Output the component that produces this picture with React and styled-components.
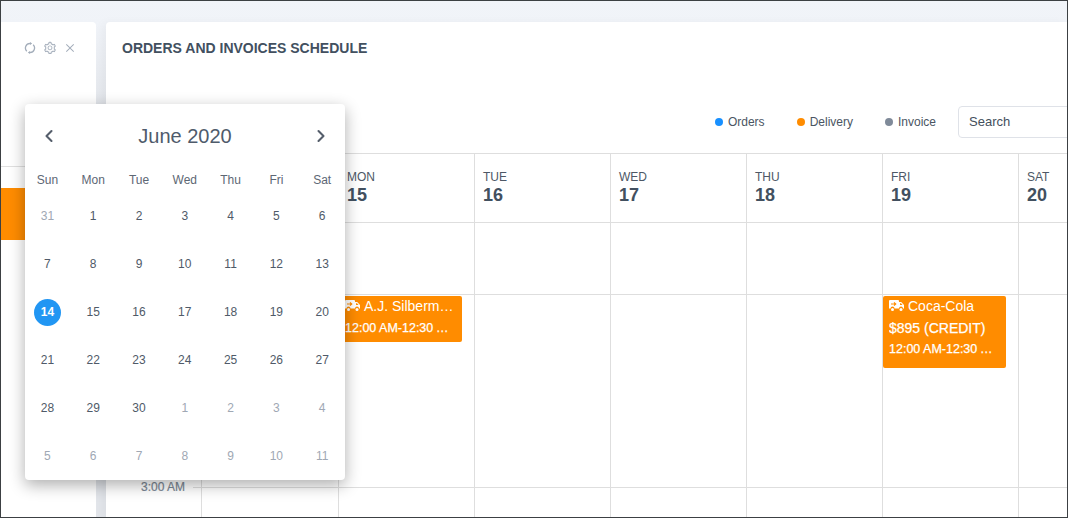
import { createGlobalStyle, styled } from 'styled-components';
import { AiOutlineSetting, AiOutlineClose } from 'react-icons/ai';
import { FiChevronLeft, FiChevronRight } from 'react-icons/fi';

const GlobalStyle = createGlobalStyle`
  html, body {
    margin: 0;
    height: 100%;
    overflow: hidden;
    font-family: "Liberation Sans", Arial, sans-serif;
  }
  * { box-sizing: border-box; }
`;

const Page = styled.div`
  position: relative;
  width: 1068px;
  height: 518px;
  overflow: hidden;
  border: 1px solid #3c4043;
  background: linear-gradient(#f1f4f9 0, #f0f3f8 24px, #e2e5ea 110px);
  padding-top: 21px;
  display: flex;
  gap: 10px;
`;

const SidePanel = styled.aside`
  width: 95px;
  flex: none;
  background: #fff;
  border-radius: 0 4px 0 0;
`;

const SideTools = styled.div`
  height: 145px;
  padding: 19px 20px 0 0;
  border-bottom: 1px solid #e0e0e0;
`;

const ToolRow = styled.div`
  height: 14px;
  display: flex;
  align-items: center;
  justify-content: flex-end;
  gap: 7px;
  color: #a3adba;
  & svg { display: block; }
`;

const SideEvent = styled.div`
  margin-top: 21px;
  height: 52px;
  background: #ff8c00;
`;

const MainPanel = styled.main`
  position: relative;
  flex: 1;
  min-width: 0;
  overflow: hidden;
  background: #fff;
  border-radius: 4px 0 0 0;
  box-shadow: -4px 0 8px rgba(0, 0, 0, 0.03);
`;

const Title = styled.h2`
  margin: 0;
  padding: 18px 16px 0;
  height: 61px;
  font-size: 14px;
  line-height: 16px;
  font-weight: 700;
  color: #42505f;
`;

const Toolbar = styled.div`
  height: 70px;
  padding-top: 23px;
  display: flex;
  justify-content: flex-end;
  align-items: flex-start;
`;

const Legend = styled.div`
  display: flex;
  align-items: center;
  gap: 32px;
  height: 31px;
  margin-right: 22px;
`;

const LegendItem = styled.span`
  display: flex;
  align-items: center;
  gap: 5px;
  font-size: 12px;
  color: #4a5562;
  &::before {
    content: '';
    width: 8px;
    height: 8px;
    border-radius: 50%;
    background: ${(p) => p.$color};
  }
`;

const SearchBox = styled.div`
  width: 130px;
  height: 32px;
  margin-right: -21px;
  padding: 0 10px 2px;
  flex: none;
  display: flex;
  align-items: center;
  border: 1px solid #dfe2e8;
  border-radius: 4px;
  font-size: 13px;
  color: #444f5c;
`;

const Schedule = styled.div`
  display: grid;
  grid-template-columns: 96px 137px repeat(6, 136px);
  grid-template-rows: 69px 72px 193px 40px;
  border-top: 1px solid #dedede;
`;

const Cell = styled.div`
  border-right: 1px solid #dedede;
  border-bottom: 1px solid #dedede;
`;

const HeadCell = styled(Cell)`
  padding: 16px 0 0 8px;
`;

const DayName = styled.div`
  font-size: 12px;
  line-height: 14px;
  color: #4d5866;
`;

const DayNumber = styled.div`
  margin-top: 1px;
  font-size: 18px;
  line-height: 21px;
  font-weight: 700;
  color: #42505f;
`;

const GutterCell = styled(Cell)`
  border-bottom: 0;
`;

const TimeCell = styled(Cell)`
  position: relative;
  border-bottom: 0;
`;

const TimeLabel = styled.span`
  position: absolute;
  top: -8px;
  right: 16px;
  font-size: 12px;
  line-height: 14px;
  color: #7b8794;
  -webkit-text-stroke: 0.2px #7b8794;
`;

const Tick = styled.span`
  position: absolute;
  top: -1px;
  right: 0;
  width: 8px;
  height: 1px;
  background: #dedede;
`;

const Event = styled.div`
  width: 123px;
  height: ${(p) => p.$height}px;
  margin-top: 1px;
  padding: 0 8px 0 6px;
  border-radius: 2px;
  background: #ff8c00;
  color: #fff;
`;

const EventLine = styled.div`
  white-space: nowrap;
  overflow: hidden;
  text-overflow: ellipsis;
  font-size: 14px;
  line-height: 21px;
  -webkit-text-stroke: ${(p) => (p.$strong ? '0.25px #fff' : '0')};
  &:nth-child(2) { margin-top: 1px; }
  & svg { vertical-align: -1px; margin-right: 4px; }
`;

const EventTime = styled(EventLine)`
  font-size: 12.5px;
  -webkit-text-stroke: 0.25px #fff;
`;

const DatePicker = styled.div`
  position: absolute;
  left: 24px;
  top: 103px;
  width: 320px;
  height: 376px;
  background: #fff;
  border-radius: 4px;
  box-shadow: 0 5px 16px rgba(0, 0, 0, 0.32);
`;

const PickerHead = styled.div`
  height: 64px;
  padding: 0 14px;
  display: flex;
  align-items: center;
  justify-content: space-between;
  color: #555e6b;
  & svg { display: block; }
`;

const Month = styled.span`
  font-size: 20px;
  color: #4f5b6b;
`;

const DayGrid = styled.div`
  display: grid;
  grid-template-columns: repeat(7, 45.8px);
  grid-template-rows: 24px;
  grid-auto-rows: 48px;
  margin-left: -0.5px;
  justify-items: center;
  align-items: center;
`;

const WeekHead = styled.span`
  font-size: 12px;
  color: #5d6774;
`;

const Day = styled.span`
  width: 27px;
  height: 27px;
  display: flex;
  align-items: center;
  justify-content: center;
  border-radius: 50%;
  font-size: 12px;
  font-weight: ${(p) => (p.$today ? 700 : 400)};
  color: ${(p) => (p.$today ? '#fff' : p.$muted ? '#a0a8b4' : '#4f5a68')};
  background: ${(p) => (p.$today ? '#2196f3' : 'transparent')};
`;

const SyncIcon = () => (
  <svg width="12" height="12" viewBox="0 0 12 12" fill="none" stroke="currentColor" strokeWidth="1.3">
    <path d="M6 1.5A4.5 4.5 0 0 0 2.8 9.2" />
    <path d="M6 10.5A4.5 4.5 0 0 0 9.2 2.8" />
    <path d="M6 0v3l2.2-1.5z" fill="currentColor" stroke="none" />
    <path d="M6 9v3l-2.2-1.5z" fill="currentColor" stroke="none" />
  </svg>
);

const TruckIcon = () => (
  <svg width="15" height="12" viewBox="0 0 15 12">
    <path d="M1 0h8a1 1 0 0 1 1 1v1h2.2L15 5v3.5h-1a2 2 0 0 0-4 0H5.5a2 2 0 0 0-4 0H0V1a1 1 0 0 1 1-1z" fill="#fff" />
    <path d="M11 3.2h1L13.6 5H11z" fill="#ff8c00" />
    <path d="M2 4h4.6M5 2.4 6.8 4 5 5.6" fill="none" stroke="#ff8c00" strokeWidth="1.1" />
    <circle cx="3.5" cy="9.5" r="1.5" fill="#fff" />
    <circle cx="12" cy="9.5" r="1.5" fill="#fff" />
  </svg>
);

const weekdays = ['Sun', 'Mon', 'Tue', 'Wed', 'Thu', 'Fri', 'Sat'];
const columns = [
  ['MON', 15],
  ['TUE', 16],
  ['WED', 17],
  ['THU', 18],
  ['FRI', 19],
  ['SAT', 20],
];

// 42 cells from May 31 to July 11
const pickerDays = Array.from({ length: 42 }, (_, i) => {
  if (i === 0) return { n: 31, muted: true };
  if (i <= 30) return { n: i };
  return { n: i - 30, muted: true };
});

const App = () => {
  return (
    <Page>
      <GlobalStyle />
      <SidePanel>
        <SideTools>
          <ToolRow>
            <SyncIcon />
            <AiOutlineSetting size={14} />
            <AiOutlineClose size={12} />
          </ToolRow>
        </SideTools>
        <SideEvent />
      </SidePanel>
      <MainPanel>
        <Title>ORDERS AND INVOICES SCHEDULE</Title>
        <Toolbar>
          <Legend>
            <LegendItem $color="#1890ff">Orders</LegendItem>
            <LegendItem $color="#ff8c00">Delivery</LegendItem>
            <LegendItem $color="#7f8a99">Invoice</LegendItem>
          </Legend>
          <SearchBox>Search</SearchBox>
        </Toolbar>
        <Schedule>
          <HeadCell />
          <HeadCell />
          {columns.map(([name, num]) => (
            <HeadCell key={name}>
              <DayName>{name}</DayName>
              <DayNumber>{num}</DayNumber>
            </HeadCell>
          ))}
          {Array.from({ length: 8 }, (_, i) => <Cell key={i} />)}
          <GutterCell />
          <Cell />
          <Cell>
            <Event $height={46}>
              <EventLine><TruckIcon />A.J. Silberman</EventLine>
              <EventTime>12:00 AM-12:30 AM</EventTime>
            </Event>
          </Cell>
          <Cell />
          <Cell />
          <Cell />
          <Cell>
            <Event $height={72}>
              <EventLine><TruckIcon />Coca-Cola</EventLine>
              <EventLine $strong>$895 (CREDIT)</EventLine>
              <EventTime>12:00 AM-12:30 AM</EventTime>
            </Event>
          </Cell>
          <Cell />
          <TimeCell><TimeLabel>3:00 AM</TimeLabel><Tick /></TimeCell>
          {Array.from({ length: 7 }, (_, i) => <TimeCell key={i} />)}
        </Schedule>
      </MainPanel>
      <DatePicker>
        <PickerHead>
          <FiChevronLeft size={20} strokeWidth={2.5} />
          <Month>June 2020</Month>
          <FiChevronRight size={20} strokeWidth={2.5} />
        </PickerHead>
        <DayGrid>
          {weekdays.map((d) => <WeekHead key={d}>{d}</WeekHead>)}
          {pickerDays.map((d, i) => (
            <Day key={i} $muted={d.muted} $today={!d.muted && d.n === 14}>{d.n}</Day>
          ))}
        </DayGrid>
      </DatePicker>
    </Page>
  );
};

export default App;
